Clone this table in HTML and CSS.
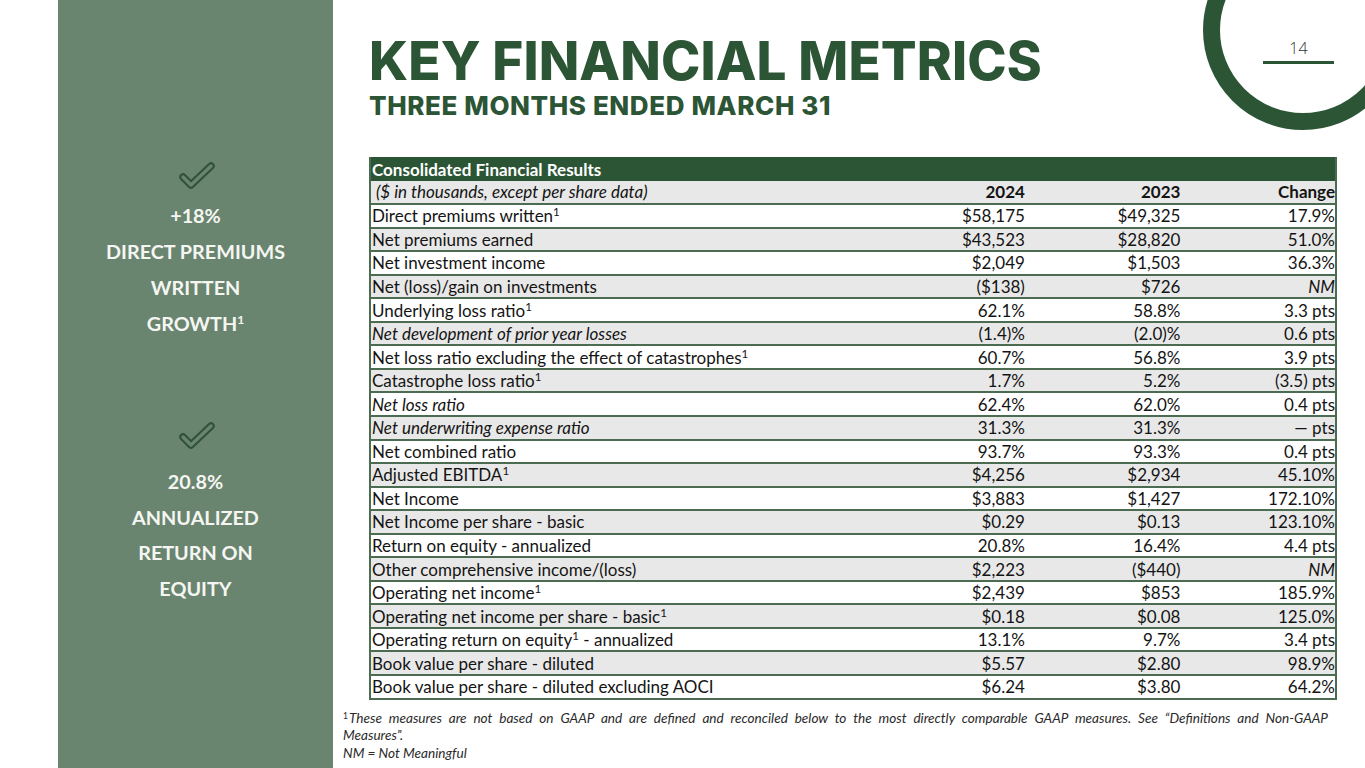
FILE: index.html
```html
<!DOCTYPE html>
<html lang="en">
<head>
<meta charset="utf-8">
<title>Key Financial Metrics</title>
<link rel="stylesheet" href="styles.css">
</head>
<body>
<div class="slide">
  <aside class="sidebar">
    <div class="kpi kpi-first">
      <svg class="check" width="40" height="30" viewBox="0 0 40 30">
        <polyline points="6,15 14,23 34,4" fill="none" stroke="#2f5238" stroke-width="7.5" stroke-linecap="round" stroke-linejoin="round"/>
        <polyline points="6,15 14,23 34,4" fill="none" stroke="#69846f" stroke-width="3.5" stroke-linecap="round" stroke-linejoin="round"/>
      </svg>
      <p>+18%</p>
      <p>DIRECT PREMIUMS</p>
      <p>WRITTEN</p>
      <p>GROWTH<span class="sup-s">1</span></p>
    </div>
    <div class="kpi kpi-second">
      <svg class="check" width="40" height="30" viewBox="0 0 40 30">
        <polyline points="6,15 14,23 34,4" fill="none" stroke="#2f5238" stroke-width="7.5" stroke-linecap="round" stroke-linejoin="round"/>
        <polyline points="6,15 14,23 34,4" fill="none" stroke="#69846f" stroke-width="3.5" stroke-linecap="round" stroke-linejoin="round"/>
      </svg>
      <p>20.8%</p>
      <p>ANNUALIZED</p>
      <p>RETURN ON</p>
      <p>EQUITY</p>
    </div>
  </aside>

  <main class="content">
    <header class="titles">
      <h1>KEY FINANCIAL METRICS</h1>
      <h2>THREE MONTHS ENDED MARCH 31</h2>
    </header>

    <table class="fin">
      <colgroup>
        <col class="c-label"><col class="c-num"><col class="c-num"><col class="c-num">
      </colgroup>
      <tr class="head"><td colspan="4">Consolidated Financial Results</td></tr>
      <tr class="sub g"><td><i>&nbsp;($ in thousands, except per share data)</i></td><td>2024</td><td>2023</td><td>Change</td></tr>
      <tr><td>Direct premiums written<sup>1</sup></td><td>$58,175</td><td>$49,325</td><td>17.9%</td></tr>
      <tr class="g"><td>Net premiums earned</td><td>$43,523</td><td>$28,820</td><td>51.0%</td></tr>
      <tr><td>Net investment income</td><td>$2,049</td><td>$1,503</td><td>36.3%</td></tr>
      <tr class="g"><td>Net (loss)/gain on investments</td><td>($138)</td><td>$726</td><td><i>NM</i></td></tr>
      <tr><td>Underlying loss ratio<sup>1</sup></td><td>62.1%</td><td>58.8%</td><td>3.3 pts</td></tr>
      <tr class="g"><td><i>Net development of prior year losses</i></td><td>(1.4)%</td><td>(2.0)%</td><td>0.6 pts</td></tr>
      <tr><td>Net loss ratio excluding the effect of catastrophes<sup>1</sup></td><td>60.7%</td><td>56.8%</td><td>3.9 pts</td></tr>
      <tr class="g"><td>Catastrophe loss ratio<sup>1</sup></td><td>1.7%</td><td>5.2%</td><td>(3.5) pts</td></tr>
      <tr><td><i>Net loss ratio</i></td><td>62.4%</td><td>62.0%</td><td>0.4 pts</td></tr>
      <tr class="g"><td><i>Net underwriting expense ratio</i></td><td>31.3%</td><td>31.3%</td><td>— pts</td></tr>
      <tr><td>Net combined ratio</td><td>93.7%</td><td>93.3%</td><td>0.4 pts</td></tr>
      <tr class="g"><td>Adjusted EBITDA<sup>1</sup></td><td>$4,256</td><td>$2,934</td><td>45.10%</td></tr>
      <tr><td>Net Income</td><td>$3,883</td><td>$1,427</td><td>172.10%</td></tr>
      <tr class="g"><td>Net Income per share - basic</td><td>$0.29</td><td>$0.13</td><td>123.10%</td></tr>
      <tr><td>Return on equity - annualized</td><td>20.8%</td><td>16.4%</td><td>4.4 pts</td></tr>
      <tr class="g"><td>Other comprehensive income/(loss)</td><td>$2,223</td><td>($440)</td><td><i>NM</i></td></tr>
      <tr><td>Operating net income<sup>1</sup></td><td>$2,439</td><td>$853</td><td>185.9%</td></tr>
      <tr class="g"><td>Operating net income per share - basic<sup>1</sup></td><td>$0.18</td><td>$0.08</td><td>125.0%</td></tr>
      <tr><td>Operating return on equity<sup>1</sup> - annualized</td><td>13.1%</td><td>9.7%</td><td>3.4 pts</td></tr>
      <tr class="g"><td>Book value per share - diluted</td><td>$5.57</td><td>$2.80</td><td>98.9%</td></tr>
      <tr><td>Book value per share - diluted excluding AOCI</td><td>$6.24</td><td>$3.80</td><td>64.2%</td></tr>
    </table>

    <footer class="notes">
      <p class="just"><span class="fn-mark">1</span>These measures are not based on GAAP and are defined and reconciled below to the most directly comparable GAAP measures. See “Definitions and Non-GAAP Measures”.</p>
      <p>NM = Not Meaningful</p>
    </footer>
  </main>

  <div class="corner">
    <div class="ring"></div>
    <div class="pagenum">14</div>
  </div>
</div>
</body>
</html>
```

FILE: styles.css
```css
* { box-sizing: border-box; }
html, body { margin: 0; padding: 0; background: #ffffff; }
body { width: 1365px; height: 768px; overflow: hidden; font-family: Lato, "Open Sans", sans-serif; }

.slide {
  position: relative;
  width: 1365px;
  height: 768px;
  display: flex;
  flex-direction: row;
  overflow: hidden;
}

/* Sidebar */
.sidebar {
  margin-left: 58px;
  width: 275px;
  flex: 0 0 275px;
  height: 768px;
  background: #69846f;
  display: flex;
  flex-direction: column;
  align-items: center;
  padding-top: 162px;
}
.kpi { display: flex; flex-direction: column; align-items: center; }
.kpi p {
  margin: 0;
  color: #f5f6f2;
  font-weight: 700;
  font-size: 19.8px;
  line-height: 36px;
  text-align: center;
}
.kpi .check { display: block; margin-bottom: 5px; margin-left: 3px; }
.kpi-second { margin-top: 81px; }
.kpi-second .check { margin-bottom: 12px; }
.kpi-second p { line-height: 35.7px; }
.sup-s { font-size: 12px; vertical-align: 7px; line-height: 0; }

/* Main content */
.content {
  flex: 1;
  padding-left: 10px;
  padding-right: 28px;
  display: flex;
  flex-direction: column;
}
.titles { padding-left: 26px; padding-top: 34px; height: 157px; }
.titles h1 {
  margin: 0;
  font-family: Inter, "Open Sans", sans-serif;
  font-weight: 800;
  font-size: 53px;
  line-height: 54px;
  color: #2c5535;
  letter-spacing: 0.1px;
}
.titles h2 {
  margin: 2px 0 0;
  font-family: Inter, "Open Sans", sans-serif;
  font-weight: 800;
  font-size: 26px;
  line-height: 32px;
  color: #2c5535;
  letter-spacing: 0.6px;
}

/* Table */
.fin {
  margin-left: 26px;
  width: 968px;
  border-collapse: collapse;
  font-size: 17px;
  color: #141414;
  border-left: 2px solid #4c6c52;
  border-right: 2px solid #4c6c52;
}
.c-label { width: 500px; }
.c-num { width: 156px; }
.fin td {
  height: 23.55px;
  padding: 1px 0 0 1px;
  line-height: 20px;
  border-bottom: 2px solid #4c6c52;
  white-space: nowrap;
  text-align: right;
}
.fin td:first-child { text-align: left; }
.fin tr.g td { background: #e8e8e8; }
.fin tr.head td {
  background: #2c5535;
  color: #ffffff;
  font-weight: 700;
  border-bottom: 0;
  padding-top: 2px;
}
.fin tr.sub td { font-weight: 700; }
.fin tr.sub td:first-child { font-weight: 400; }
.fin sup { font-size: 11.5px; line-height: 0; vertical-align: 6px; }

/* Footnote */
.notes {
  margin-top: 10px;
  width: 985px;
  font-size: 13.6px;
  font-style: italic;
  color: #2a2a2a;
  line-height: 17.5px;
}
.notes p { margin: 0; }
.notes .just { text-align: justify; text-align-last: left; word-spacing: 1.5px; }
.notes .fn-mark { font-size: 8.5px; font-style: normal; display: inline-block; line-height: 8px; vertical-align: top; margin-top: 2px; margin-right: 1px; }

/* Corner decoration */
.corner {
  position: absolute;
  top: 0;
  right: 0;
  width: 180px;
  height: 140px;
}
.ring {
  position: absolute;
  left: 18px;
  top: -70px;
  width: 200px;
  height: 200px;
  border: 17px solid #2b5535;
  border-radius: 50%;
}
.pagenum {
  position: absolute;
  left: 78px;
  top: 38px;
  width: 71px;
  text-align: center;
  font-family: "Open Sans", sans-serif;
  font-weight: 300;
  font-size: 16px;
  line-height: 20px;
  color: #333333;
  padding-bottom: 3px;
  border-bottom: 3px solid #2b5535;
}
```
